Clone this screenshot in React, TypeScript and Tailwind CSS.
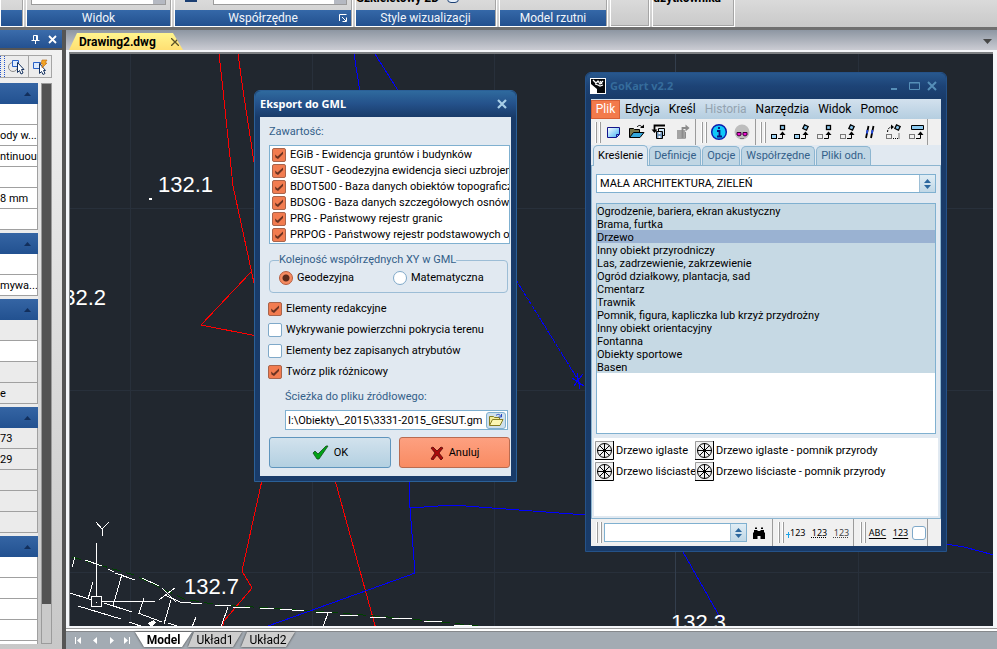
import React, { useState } from 'react';

const sans = "font-['Roboto',sans-serif] text-[11px] leading-[14px]";
const segoe = "font-['Roboto',sans-serif] text-[12px] leading-4";

/* ---------- Data ---------- */

const EXPORT_SETS = [
  'EGiB - Ewidencja gruntów i budynków',
  'GESUT - Geodezyjna ewidencja sieci uzbrojenia terenu',
  'BDOT500 - Baza danych obiektów topograficznych',
  'BDSOG - Baza danych szczegółowych osnów',
  'PRG - Państwowy rejestr granic',
  'PRPOG - Państwowy rejestr podstawowych osnów',
];

const EXPORT_OPTIONS = [
  { label: 'Elementy redakcyjne', checked: true },
  { label: 'Wykrywanie powierzchni pokrycia terenu', checked: false },
  { label: 'Elementy bez zapisanych atrybutów', checked: false },
  { label: 'Twórz plik różnicowy', checked: true },
];

const OBJECTS = [
  'Ogrodzenie, bariera, ekran akustyczny',
  'Brama, furtka',
  'Drzewo',
  'Inny obiekt przyrodniczy',
  'Las, zadrzewienie, zakrzewienie',
  'Ogród działkowy, plantacja, sad',
  'Cmentarz',
  'Trawnik',
  'Pomnik, figura, kapliczka lub krzyż przydrożny',
  'Inny obiekt orientacyjny',
  'Fontanna',
  'Obiekty sportowe',
  'Basen',
];

const SYMBOLS = [
  'Drzewo iglaste',
  'Drzewo iglaste - pomnik przyrody',
  'Drzewo liściaste',
  'Drzewo liściaste - pomnik przyrody',
];

const PROPERTY_GROUPS = [
  { gray: [] as number[], rows: ['', 'ody w...', 'ntinuous', '', '8 mm', ''] },
  { gray: [], rows: ['', 'mywa...'] },
  { gray: [0, 2, 3], rows: ['', '', '', 'e'] },
  { gray: [0, 1, 2, 3, 4], rows: ['73', '29', '', '', ''] },
  { gray: [], rows: ['', '', '', '', ''] },
];

/* ---------- Small controls ---------- */

const Check = ({ label, defaultChecked }: { label: string; defaultChecked?: boolean }) => (
  <label className="flex h-full items-center gap-1 whitespace-nowrap">
    <span className="grid h-[14px] w-[14px] shrink-0">
      <input
        type="checkbox"
        defaultChecked={defaultChecked}
        className="peer [grid-area:1/1] h-[14px] w-[14px] appearance-none rounded-[2px] border border-[#7fa9c9] bg-white checked:border-[#a8644c] checked:bg-[#f27c50]"
      />
      <svg viewBox="0 0 14 14" className="pointer-events-none invisible [grid-area:1/1] peer-checked:visible">
        <path d="M3 6.500l2.500 2L11 3.500v2.500L6 11 3.500 9.500z" fill="#6b3322" />
      </svg>
    </span>
    <span>{label}</span>
  </label>
);

const Radio = ({ label, defaultChecked }: { label: string; defaultChecked?: boolean }) => (
  <label className="flex items-center gap-1">
    <input
      type="radio"
      name="xy"
      defaultChecked={defaultChecked}
      className="h-[14px] w-[14px] appearance-none rounded-full border border-[#7fa9c9] bg-white checked:border-[#b5593a] checked:bg-[radial-gradient(circle,#5c2a1a_0_3px,#f58a60_4px)]"
    />
    <span>{label}</span>
  </label>
);

const Combo = ({ options, label, className }: { options: string[]; label: string; className: string }) => (
  <div className={`grid border border-[#7fb0d0] bg-white ${className}`}>
    <select aria-label={label} className="[grid-area:1/1] w-full appearance-none bg-transparent pl-[3px] outline-none">
      {options.map((o) => (
        <option key={o}>{o}</option>
      ))}
    </select>
    <span className="pointer-events-none flex w-4 items-center justify-center justify-self-end border-l border-[#9dbfd6] bg-gradient-to-b from-[#e0edf5] to-[#c0d7e6] [grid-area:1/1]">
      <svg width="7" height="10" viewBox="0 0 7 10">
        <path d="M0 4l3.500-4L7 4zM0 6h7l-3.500 4z" fill="#2c679e" />
      </svg>
    </span>
  </div>
);

const Icon = ({ label, children, disabled }: { label: string; children: React.ReactNode; disabled?: boolean }) => (
  <button type="button" aria-label={label} disabled={disabled} className="flex h-[22px] w-[23px] items-center justify-center">
    <svg width="18" height="18" viewBox="0 0 18 18" fill="none" stroke="#000">
      {children}
    </svg>
  </button>
);

const Grip = () => (
  <span className="flex h-[21px] shrink-0 gap-[2px]">
    <span className="w-[2px] border-r border-[#9b9b9b] bg-white" />
    <span className="w-[2px] border-r border-[#9b9b9b] bg-white" />
  </span>
);

/* ---------- Toolbar glyphs ---------- */

const Arrow = () => (
  <g>
    <path d="M9 15.500h4.500V11" />
    <path d="M10.500 12L13.500 8.500l3 3.500z" fill="#000" stroke="none" />
  </g>
);

const Box = ({ dashed }: { dashed?: boolean }) => (
  <rect x="2.500" y="11.500" width="5" height="4" fill={dashed ? 'none' : '#9fd4f5'} strokeDasharray={dashed ? '1 1' : undefined} />
);

const TargetBox = ({ turned }: { turned?: boolean }) => (
  <rect x="11.500" y="2.500" width="4" height="4" fill="#8ccbf2" strokeWidth="1.300" transform={turned ? 'rotate(25 13.500 4.500)' : undefined} />
);

/* ---------- Drawing on the canvas ---------- */

const Drawing = () => (
  <svg className="block h-full w-full" aria-label="Drawing2.dwg">
    <g transform="translate(-70 -54)" fill="none" shapeRendering="crispEdges">
      <path d="M130.500 54V649M312.500 54V649M494.500 54V649M858.500 54V649M70 208.500H2000M70 390.500H2000M70 572.500H2000" stroke="#28303b" />
      <path d="M675.500 54V649" stroke="#333e4d" />

      <g stroke="#ff0000">
        <path d="M219 54l4 36 10 96 21 97M238 54l5 36 11 72M251 272l-50 53 56 11" />
        <path d="M262 480l-20 91 10 17-28 33-2 8M335 480l41 149" />
      </g>

      <g stroke="#0000ff">
        <path d="M354 54l6 38M375 54l24 38" />
        <path d="M516 280l66 106" strokeDasharray="4 1" />
        <path d="M572 378l12 8M574 386l9-12M577 373l3 16" />
        <path d="M409 480l1 28 5 65-8 3-139 50M410 508l42-3 134 10" />
        <path d="M683 552l38 67M946 544l18 3 30 8" />
      </g>

      <path d="M72 557l62 18 50 24 35 6 34 2 72 5 75 6 80 8" stroke="#004000" strokeDasharray="9 5" />
      <g stroke="#fff">
        <path d="M85 560l17 6M108 569l6 3M115 573l20 7M142 578l17 8M165 595l15 7 22 2M215 605l16 1M233 607l17 0M260 608l14 0M280 609l24 2M316 612l16 1M340 615l18 1M370 617l16 1M392 618l20 1M424 621l18 1M454 625l18 1" />
        <path d="M122 574l-9 32M93 582l-5 17M171 600l-7 24M228 607l-7 20M328 613l-5 14M144 598l-5 15M72 567l3-10M196 617l-4 10" />
        <path d="M70 593l22 7M104 603l28 9M78 606l43 13M138 613l24 9M129 622l20 7M168 623l12 4" />
        <path d="M96.500 543v53M101 601.500h54M91.500 596.500h10v10h-10zM96 602h1" />
        <path d="M96 522l6 7 7-7M102.500 529v7M162 588l14 14M175 588l-16 12" />
      </g>
      <path d="M148 623l6-3 2 3-5 4zM149 198h3v2h-3z" fill="#fff" />
    </g>
    <g transform="translate(-70 -54)" fill="#fff" className="font-['Liberation_Sans',sans-serif] text-[22px]">
      <text x="158" y="192">132.1</text>
      <text x="51" y="305">132.2</text>
      <text x="184" y="594">132.7</text>
      <text x="671" y="630">132.3</text>
    </g>
  </svg>
);

/* ---------- Ribbon ---------- */

const RibbonPanel = ({ title, className, children }: { title?: string; className: string; children?: React.ReactNode }) => (
  <section className={`flex shrink-0 flex-col overflow-hidden border-x border-b border-white ${className}`}>
    <div className="flex h-[10px] shrink-0 items-end justify-end overflow-hidden border-r border-[#a5a5a5] whitespace-nowrap">{children}</div>
    {title !== undefined ? (
      <div className={`flex h-4 items-center border-r border-[#a5a5a5] bg-gradient-to-b from-[#3568a8] to-[#22508f] text-[#f2f5fa] ${segoe}`}>
        <h2 className={title === 'Współrzędne' ? 'flex-1 pl-3 text-center' : 'flex-1 text-center'}>{title}</h2>
        {title === 'Współrzędne' && (
          <svg width="12" height="9" viewBox="0 0 12 9" fill="none" stroke="#fff">
            <path d="M.5 7V.5h7M3 3l4 4M7.500 3.500v4h-4" />
          </svg>
        )}
      </div>
    ) : (
      <div className="h-4 border-r border-b border-[#a5a5a5]" />
    )}
  </section>
);

const RibbonField = ({ className }: { className: string }) => (
  <span className={`mb-[5px] flex h-2 justify-end border border-t-0 border-[#9b9b9b] bg-white ${className}`}>
    <span className="w-3 bg-[#b5b9c2]" />
  </span>
);

const Ribbon = () => (
  <header className="flex h-[30px] shrink-0 gap-[2px] overflow-hidden border-b-[3px] border-[#6f6f6f] bg-gradient-to-b from-[#dadada] to-[#c9c9c9]">
    <RibbonPanel className="w-6" title="" />
    <RibbonPanel className="w-[146px]" title="Widok">
      <RibbonField className="mr-1 w-[135px]" />
    </RibbonPanel>
    <RibbonPanel className="w-[179px]" title="Współrzędne">
      <span className="mb-2 h-[2px] w-3 bg-[#1b3f73]" />
      <RibbonField className="mr-1 ml-4 w-[134px]" />
    </RibbonPanel>
    <RibbonPanel className="w-[142px]" title="Style wizualizacji">
      <span className="mb-1 flex items-end gap-2 pr-9">
        <b className={segoe}>Szkieletowy 2D</b>
        <span className="mb-[3px] h-3 w-3 rounded-sm border border-[#1b3f73] bg-[#e6effa]" />
      </span>
    </RibbonPanel>
    <RibbonPanel className="w-[109px]" title="Model rzutni" />
    <RibbonPanel className="w-10" />
    <RibbonPanel className="w-[83px]">
      <b className={`mb-1 pr-3 ${segoe}`}>użytkownika</b>
    </RibbonPanel>
  </header>
);

/* ---------- Properties palette ---------- */

const Properties = () => (
  <aside className="flex w-[66px] shrink-0 flex-col overflow-hidden border-r-4 border-[#555] bg-gradient-to-b from-[#f2f2f2] to-[#c8c8c8]">
    <div className="flex h-5 shrink-0 items-center justify-end gap-2 border-b-2 border-[#555] bg-gradient-to-b from-[#3b6cab] to-[#245190] pr-[5px]">
      <button type="button" aria-label="Przypnij">
        <svg width="9" height="9" viewBox="0 0 9 9" fill="none" stroke="#fff">
          <path d="M2.500 5V.5h4V5M5.500 1v4M.5 5.500h8M4.500 6v3" />
        </svg>
      </button>
      <button type="button" aria-label="Zamknij paletę">
        <svg width="9" height="9" viewBox="0 0 9 9" stroke="#fff" strokeWidth="1.800">
          <path d="M1 1l7 7M8 1L1 8" />
        </svg>
      </button>
    </div>

    <div className="mt-[5px] flex h-[23px] w-[52px] shrink-0 divide-x divide-[#a5a5a5] border border-l-0 border-[#a5a5a5] bg-[#ececec]">
      <span className="w-[5px] border-l border-dotted border-[#2456d0]" />
      <button type="button" aria-label="Wybierz obiekty" className="flex flex-1 items-center justify-center">
        <svg width="18" height="18" viewBox="0 0 18 18" fill="none">
          <circle cx="6" cy="9" r="4.500" stroke="#8b8b8b" />
          <path d="M5.500 2.500h6v6h-6z" fill="#dcebff" stroke="#2a62c8" />
          <path d="M10.500 4.500v10l2-2 1.500 3.500 2-1-1.500-3.500h2.500z" fill="#fff" stroke="#14315f" />
        </svg>
      </button>
      <button type="button" aria-label="Szybki wybór" className="flex flex-1 items-center justify-center">
        <svg width="18" height="18" viewBox="0 0 18 18" fill="none">
          <path d="M2.500 4.500h7v6h-7z" fill="#dcebff" stroke="#2a62c8" />
          <path d="M8.500 5.500v10l2-2 1.500 3 2-1-1.500-3h2z" fill="#fff" stroke="#14315f" />
          <path d="M11 2h5l-2 3h2l-5 5 1-4h-2z" fill="#f5a623" stroke="#b9650c" strokeWidth=".6" />
        </svg>
      </button>
    </div>

    <div className="mt-[5px] mb-[5px] flex min-h-0 flex-1 gap-[3px]">
      <div className="flex w-[38px] shrink-0 flex-col gap-[3px] overflow-hidden bg-[#ececec]">
        {PROPERTY_GROUPS.map((group, g) => (
          <div key={g} className="shrink-0">
            <button type="button" aria-label="Zwiń grupę" className="flex h-[21px] w-full items-center justify-end bg-gradient-to-b from-[#3565a4] to-[#225190] pr-[7px]">
              <svg width="7" height="4" viewBox="0 0 7 4"><path d="M0 4l3.500-4L7 4z" fill="#122f5c" /></svg>
            </button>
            {group.rows.map((value, i) => (
              <div
                key={i}
                className={`h-[21px] overflow-hidden border-r border-b border-[#a0a0a0] leading-[21px] whitespace-nowrap font-['Roboto',sans-serif] text-[11px] ${group.gray.includes(i) ? 'bg-[#ebebeb]' : 'bg-white'}`}
              >
                {value}
              </div>
            ))}
          </div>
        ))}
      </div>
      <div className="w-[11px] border border-[#9b9b9b] bg-[#cacaca]">
        <div className="h-[93%] bg-[#535353]" />
      </div>
    </div>
  </aside>
);

/* ---------- Export dialog ---------- */

const ExportDialog = () => (
  <section
    role="dialog"
    aria-label="Eksport do GML"
    className={`absolute top-9 left-[184px] w-[263px] rounded-t-md border border-[#2b6097] bg-[#193b69] px-[5px] pb-[5px] ${sans}`}
  >
    <div className="-mx-[5px] flex h-[26px] items-center justify-between rounded-t-md bg-gradient-to-b from-[#2f6a9e] via-[#24518a] to-[#193b69] px-[5px]">
      <h2 className="font-['Noto_Sans',sans-serif] text-[11px] font-bold text-white">Eksport do GML</h2>
      <button type="button" aria-label="Zamknij" className="mr-1">
        <svg width="10" height="10" viewBox="0 0 10 10" stroke="#a9cfe8" strokeWidth="2.200"><path d="M1 1l8 8M9 1L1 9" /></svg>
      </button>
    </div>

    <form className="flex flex-col bg-[#e1e9f1] pt-2 pr-px pb-2 pl-[9px] text-black" onSubmit={(e) => e.preventDefault()}>
      <p className="text-[#336089]">Zawartość:</p>
      <ul className="mt-[6px] overflow-hidden border border-[#7fb0d0] bg-white pt-px pl-[2px]">
        {EXPORT_SETS.map((name) => (
          <li key={name} className="h-4">
            <Check label={name} defaultChecked />
          </li>
        ))}
      </ul>

      <fieldset className="mt-[9px] mr-[2px] h-10 rounded-[4px] border border-[#9cbdd6] pl-[9px]">
        <legend className="text-[#336089]">Kolejność współrzędnych XY w GML</legend>
        <div className="grid h-[22px] grid-cols-2 items-center">
          <Radio label="Geodezyjna" defaultChecked />
          <Radio label="Matematyczna" />
        </div>
      </fieldset>

      <div className="mt-[5px] -ml-px">
        {EXPORT_OPTIONS.map((option) => (
          <div key={option.label} className="h-[21px]">
            <Check label={option.label} defaultChecked={option.checked} />
          </div>
        ))}
      </div>

      <label htmlFor="source-path" className="mt-2 ml-4 text-[#336089]">Ścieżka do pliku źródłowego:</label>
      <div className="mt-[6px] mr-[2px] ml-4 flex h-5 items-center border border-[#7fb0d0] bg-white pr-px">
        <input id="source-path" defaultValue="I:\Obiekty\_2015\3331-2015_GESUT.gml" className="mr-1 ml-[2px] h-full w-0 flex-1 outline-none" />
        <button type="button" aria-label="Przeglądaj" className="flex h-[17px] w-5 items-center justify-center rounded-[3px] border border-[#7fb0d0] bg-[#cfe0ec]">
          <svg width="16" height="14" viewBox="0 0 16 14" stroke="#857c20">
            <path d="M1.500 12V3.500h4l1 1h5V7" fill="#f2ec9a" />
            <path d="M1.500 12.500l3-6h10.500l-3 6z" fill="#fbf7b4" />
            <path d="M8 2.500c2-2 4-1 5 1M13.500 1v3h-3" fill="none" stroke="#2648c4" />
          </svg>
        </button>
      </div>

      <div className="mt-[7px] flex h-[31px] gap-2">
        <button type="submit" className="flex w-[122px] items-center justify-center gap-[5px] rounded-[3px] border border-[#5f95bd] bg-gradient-to-b from-[#d2e2ed] to-[#b3d0e1]">
          <svg width="17" height="15" viewBox="0 0 17 15"><path d="M1 8l2-2 3 3 8-8h2L7 14H5z" fill="#00a316" stroke="#124c1c" strokeWidth=".8" /></svg>
          OK
        </button>
        <button type="button" className="flex flex-1 items-center justify-center gap-[5px] rounded-[3px] border border-[#b96b50] bg-gradient-to-b from-[#fda080] to-[#f98b62]">
          <svg width="14" height="14" viewBox="0 0 14 14"><path d="M1 2l2-1 4 4 4-4 2 1-4 5 4 5-2 2-4-5-4 5-2-1 4-6z" fill="#a80b0b" stroke="#560707" strokeWidth=".8" /></svg>
          Anuluj
        </button>
      </div>
    </form>
  </section>
);

/* ---------- GoKart window ---------- */

const MainToolbar = () => (
  <div className="flex h-[26px] bg-[#f0f0f0]">
    <div className="flex items-center border-r border-[#9b9b9b] pr-[2px] pl-1">
      <Grip />
      <Icon label="Nowy">
        <defs>
          <linearGradient id="page" x1="0" y1="0" x2="1" y2="1">
            <stop offset="0" stopColor="#fff" />
            <stop offset="1" stopColor="#3fb2f5" />
          </linearGradient>
        </defs>
        <path d="M3.500 4.500h12v7l-3 3h-9z" fill="url(#page)" stroke="#14148c" />
        <path d="M12.500 14v-2.500H15" stroke="#14148c" />
      </Icon>
      <Icon label="Otwórz">
        <path d="M2.500 14V5.500h4l1 1h5v3" fill="#77774c" />
        <path d="M2.500 14.500l4-5h10.500l-4 5z" fill="#35a8dc" />
        <path d="M10 4c2-2.500 4-1.500 5 0" />
        <path d="M13 5h4V1.500z" fill="#000" stroke="none" />
      </Icon>
      <Icon label="Zapisz">
        <path d="M8.500 5.500h6v7h-6z" fill="#cfe8fa" />
        <path d="M6.500 8.500h6v7h-6z" fill="#6f93b8" />
        <path d="M8.500 9h2v2h-2zM8.500 13h2v2h-2z" fill="#fff" stroke="none" />
        <path d="M15 2.500H4.500V7" strokeWidth="1.800" />
        <path d="M1.500 6.500h6L4.500 10z" fill="#000" stroke="none" />
      </Icon>
      <Icon label="Eksportuj" disabled>
        <path d="M4 7h8v9H4z" fill="#a3a3a3" stroke="none" />
        <path d="M9.500 15V5H13" stroke="#8b8b8b" strokeWidth="1.800" />
        <path d="M12.500 1.500l4 3.500-4 3.500z" fill="#8b8b8b" stroke="none" />
        <path d="M12.500 9v6.500" stroke="#8b8b8b" />
      </Icon>
    </div>
    <div className="flex items-center border-r border-[#9b9b9b] pr-[2px] pl-[5px]">
      <Grip />
      <Icon label="Informacje">
        <circle cx="9" cy="9" r="7.300" fill="#10c8f8" stroke="#0b1fb0" strokeWidth="1.500" />
        <path d="M7 8h2.500v5M7 13.500h5M9 4v2" stroke="#0b1480" strokeWidth="1.800" />
      </Icon>
      <Icon label="Podgląd">
        <circle cx="9" cy="9" r="7.500" fill="#bdbdbd" stroke="none" />
        <path d="M4 9.500h4v2.500l-2 1-2-1zM10 9.500h4v2.500l-2 1-2-1z" fill="#f010d0" stroke="#3a0038" />
        <path d="M7 15.500h4" stroke="#777" />
      </Icon>
    </div>
    <div className="flex items-center border-r border-[#9b9b9b] pl-1">
      <Grip />
      <Icon label="Wstaw"><Box /><TargetBox /><Arrow /></Icon>
      <Icon label="Wstaw z obrotem"><Box /><TargetBox turned /><Arrow /></Icon>
      <Icon label="Przesuń"><Box dashed /><TargetBox /><Arrow /></Icon>
      <Icon label="Przesuń z obrotem"><Box dashed /><TargetBox turned /><Arrow /></Icon>
      <Icon label="Równolegle">
        <path d="M7.500 3L5 15M12.500 3L10 15" strokeWidth="1.800" />
        <path d="M6.500 7l-.7 3.500M11.500 7l-.7 3.500" stroke="#244ae0" strokeWidth="1.800" />
      </Icon>
      <Icon label="Obróć">
        <path d="M2.500 11.500h5v4h-5zM9 15.500h6v-5" strokeDasharray="1 1" />
        <path d="M3.500 9c0-3 2-5 4-5" strokeDasharray="2 1" />
        <path d="M7 1.500L10 4 7 6.500z" fill="#000" stroke="none" />
        <TargetBox turned />
      </Icon>
      <Icon label="Skaluj">
        <Box dashed />
        <path d="M4.500 2.500h12v4h-12z" fill="#8ccbf2" />
        <Arrow />
      </Icon>
    </div>
  </div>
);

const BottomToolbar = () => (
  <div className="flex h-[27px] bg-[#f0f0f0]">
    <div className="flex items-center border-r border-[#9b9b9b] pr-[2px] pl-[5px]">
      <Grip />
      <Combo label="Szukaj" options={['']} className="ml-[2px] h-[19px] w-[143px]" />
      <Icon label="Znajdź">
        <path d="M4 6h3.500v1h3V6H14v2l1 1v6h-4.500v-3h-3v3H3V9l1-1zM5 3.500h2V5H5zM11 3.500h2V5h-2z" fill="#000" stroke="none" />
      </Icon>
    </div>
    <div className="flex items-center border-r border-[#9b9b9b] pl-[5px]">
      <Grip />
      <button type="button" aria-label="Punkt" className="flex w-[23px] items-end pl-[2px] font-['Noto_Sans',sans-serif] text-[9px]">
        <svg width="4" height="12" viewBox="0 0 4 12" stroke="#19a3e8"><path d="M0 6.500h4M2.500 4v6" /></svg>
        123
      </button>
      <button type="button" className="w-[23px] pl-[2px] font-['Noto_Sans',sans-serif] text-[9px] underline decoration-dotted">123</button>
      <button type="button" className="w-[23px] font-['Noto_Sans',sans-serif] text-[9px] text-[#444] underline decoration-dotted">123</button>
    </div>
    <div className="flex items-center border-r border-[#9b9b9b] pl-[6px]">
      <Grip />
      <button type="button" className="w-[23px] font-['Noto_Sans',sans-serif] text-[9px] underline underline-offset-2">ABC</button>
      <button type="button" className="w-[23px] font-['Noto_Sans',sans-serif] text-[9px] underline underline-offset-2">123</button>
      <input type="checkbox" aria-label="Opis" className="mr-px h-[14px] w-[14px] appearance-none rounded-[3px] border border-[#7fa9c9] bg-white" />
    </div>
  </div>
);

const TABS = ['Kreślenie', 'Definicje', 'Opcje', 'Współrzędne', 'Pliki odn.'];

const GoKartWindow = () => {
  const [tab, setTab] = useState(0);
  const [selected, setSelected] = useState(2);

  return (
    <section
      aria-label="GoKart v2.2"
      className={`absolute top-[18px] left-[515px] w-[362px] rounded-t-md border border-[#255288] bg-[#193b69] px-[5px] pb-[5px] text-black ${sans}`}
    >
      <div className="-mx-[5px] flex h-[26px] items-center rounded-t-md bg-gradient-to-b from-[#28588e] via-[#1d4376] to-[#193b69] pr-[9px] pl-1">
        <svg width="16" height="16" viewBox="0 0 16 16">
          <path d="M0 0h16v16H0z" fill="#fff" />
          <path d="M1 1h14v14H7v-4L1 6z" fill="#05070a" />
          <path d="M3 2l3 3 2-2 2 3 3-3M5 6l3 1 2 1 3-1M10 3l2 3" stroke="#fff" strokeWidth="1.300" fill="none" />
        </svg>
        <h2 className="ml-1 flex-1 font-['Noto_Sans',sans-serif] text-[11px] font-bold text-[#356c9c]">GoKart v2.2</h2>
        <svg width="46" height="10" viewBox="0 0 46 10" fill="none" stroke="#568fb8">
          <path d="M0 8h6" strokeWidth="2" />
          <path d="M18.500 1.500h10v7h-10zM18 2h11" />
          <path d="M37 1l8 8M45 1l-8 8" strokeWidth="2" />
        </svg>
      </div>

      <nav className={`flex h-5 items-center gap-[9px] bg-gradient-to-b from-[#d3e1ee] to-[#b5cee0] ${segoe}`}>
        <button type="button" className="-mr-1 h-[19px] w-[29px] border border-[#d65f35] bg-[#f37a4b] text-white">Plik</button>
        <button type="button">Edycja</button>
        <button type="button">Kreśl</button>
        <button type="button" disabled className="text-[#94a3b0]">Historia</button>
        <button type="button">Narzędzia</button>
        <button type="button">Widok</button>
        <button type="button">Pomoc</button>
      </nav>

      <MainToolbar />

      <div className="bg-[#e1e9f1]">
        <div role="tablist" className="flex h-[21px] items-end gap-px border-b border-[#8cb5d0] px-[2px]">
          {TABS.map((name, i) => (
            <button
              key={name}
              type="button"
              role="tab"
              aria-selected={tab === i}
              onClick={() => setTab(i)}
              className={
                tab === i
                  ? '-mb-px h-[21px] rounded-t-[5px] border border-b-0 border-[#8cb5d0] bg-[#e1e9f1] px-1'
                  : 'h-[19px] rounded-t-[5px] border border-b-0 border-[#8cb5d0] bg-[#c0d6e4] px-1 text-[#336089]'
              }
            >
              {name}
            </button>
          ))}
        </div>

        <div className="border border-t-0 border-[#8cb5d0] px-1 pt-2 pb-[2px]">
          <Combo label="Kategoria" options={['MAŁA ARCHITEKTURA, ZIELEŃ']} className="h-[19px]" />

          <ul role="listbox" aria-label="Obiekty" className="mt-[10px] h-[231px] border border-[#7fb0d0] bg-white leading-[15px]">
            {OBJECTS.map((name, i) => (
              <li
                key={name}
                role="option"
                aria-selected={selected === i}
                onClick={() => setSelected(i)}
                className={`h-[13px] ${selected === i ? 'bg-[#9ab2d2]' : 'bg-[#c6d9e4]'}`}
              >
                {name}
              </li>
            ))}
          </ul>

          <div className="-mx-[2px] mt-1 grid h-[78px] grid-cols-[100px_1fr] content-start bg-white pt-[2px] pl-px">
            {SYMBOLS.map((name) => (
              <button key={name} type="button" className="flex h-[21px] items-center gap-[2px] whitespace-nowrap">
                <svg width="19" height="19" viewBox="0 0 19 19" fill="none" stroke="#000" className="shrink-0">
                  <path d="M0 0h19v19H0z" fill="#f0f0f0" stroke="none" />
                  <path d="M.5 18V.5H18" stroke="#9b9b9b" />
                  <path d="M0 18.500h18.500V0" />
                  <circle cx="9.500" cy="9.500" r="7" />
                  <path d="M9.500 2v15M2 9.500h15M4.500 4.500l10 10M14.500 4.500l-10 10" />
                </svg>
                {name}
              </button>
            ))}
          </div>
        </div>
      </div>

      <BottomToolbar />
    </section>
  );
};

/* ---------- Page ---------- */

export default function App() {
  return (
    <div className="flex h-screen flex-col overflow-hidden bg-[#555] text-black">
      <Ribbon />
      <div className="flex min-h-0 flex-1">
        <Properties />

        <main className="flex min-w-0 flex-1 flex-col">
          <div className="flex h-5 shrink-0 items-end justify-between bg-gradient-to-b from-[#8d96a2] to-[#cbccd3] pr-[5px] pl-[3px]">
            <div className={`flex h-[17px] w-[114px] items-center justify-between bg-gradient-to-b from-[#fff58e] to-[#ffdf72] pr-1 pl-[10px] [clip-path:polygon(0_100%,8px_0,104px_0,100%_100%)] ${segoe}`}>
              <b>Drawing2.dwg</b>
              <button type="button" aria-label="Zamknij rysunek">
                <svg width="8" height="8" viewBox="0 0 8 8" stroke="#5b5227" strokeWidth="1.300"><path d="M0 0l8 8M8 0L0 8" /></svg>
              </button>
            </div>
            <button type="button" aria-label="Lista rysunków" className="mb-[6px]">
              <svg width="9" height="5" viewBox="0 0 9 5"><path d="M0 0h9L4.500 5z" fill="#474747" /></svg>
            </button>
          </div>

          <div className="flex min-h-0 flex-1 bg-[#f4f6f9] pt-[2px] pr-1 pb-[2px] pl-[3px]">
            <div className="relative min-w-0 flex-1 overflow-hidden border-t-2 border-l border-[#7d8083] bg-[#21272f]">
              <Drawing />
              <GoKartWindow />
              <ExportDialog />
            </div>
          </div>

          <footer className="flex h-[21px] shrink-0 border-t border-[#9b9b9b] bg-[#a3abb3]">
            <div className="flex flex-1 items-start border-t-2 border-white">
              <div className="flex h-[18px] flex-1 items-start border-t border-[#85888c]">
                <svg width="69" height="17" viewBox="0 0 69 17" fill="#fff">
                  <path d="M9 5h1v7H9zM15 5v7l-4-3.500zM31 5v7l-4-3.500zM44 5v7l4-3.500zM58 5v7l4-3.500zM63 5h1v7h-1z" />
                </svg>
                <div className={`flex h-[15px] drop-shadow-[0_0_1px_#333] ${segoe}`}>
                  <button type="button" className="h-[15px] w-[57px] bg-white leading-[14px] font-bold [clip-path:polygon(0_0,100%_0,47px_100%,9px_100%)]">
                    Model
                  </button>
                  <button type="button" className="-ml-1 h-[15px] w-[54px] bg-[#cdcdcd] leading-[14px] [clip-path:polygon(6px_0,100%_0,45px_100%,0_100%)]">
                    Układ1
                  </button>
                  <button type="button" className="-ml-px h-[15px] w-[54px] bg-[#cdcdcd] leading-[14px] [clip-path:polygon(6px_0,100%_0,45px_100%,0_100%)]">
                    Układ2
                  </button>
                </div>
              </div>
            </div>
          </footer>
        </main>
      </div>
    </div>
  );
}
